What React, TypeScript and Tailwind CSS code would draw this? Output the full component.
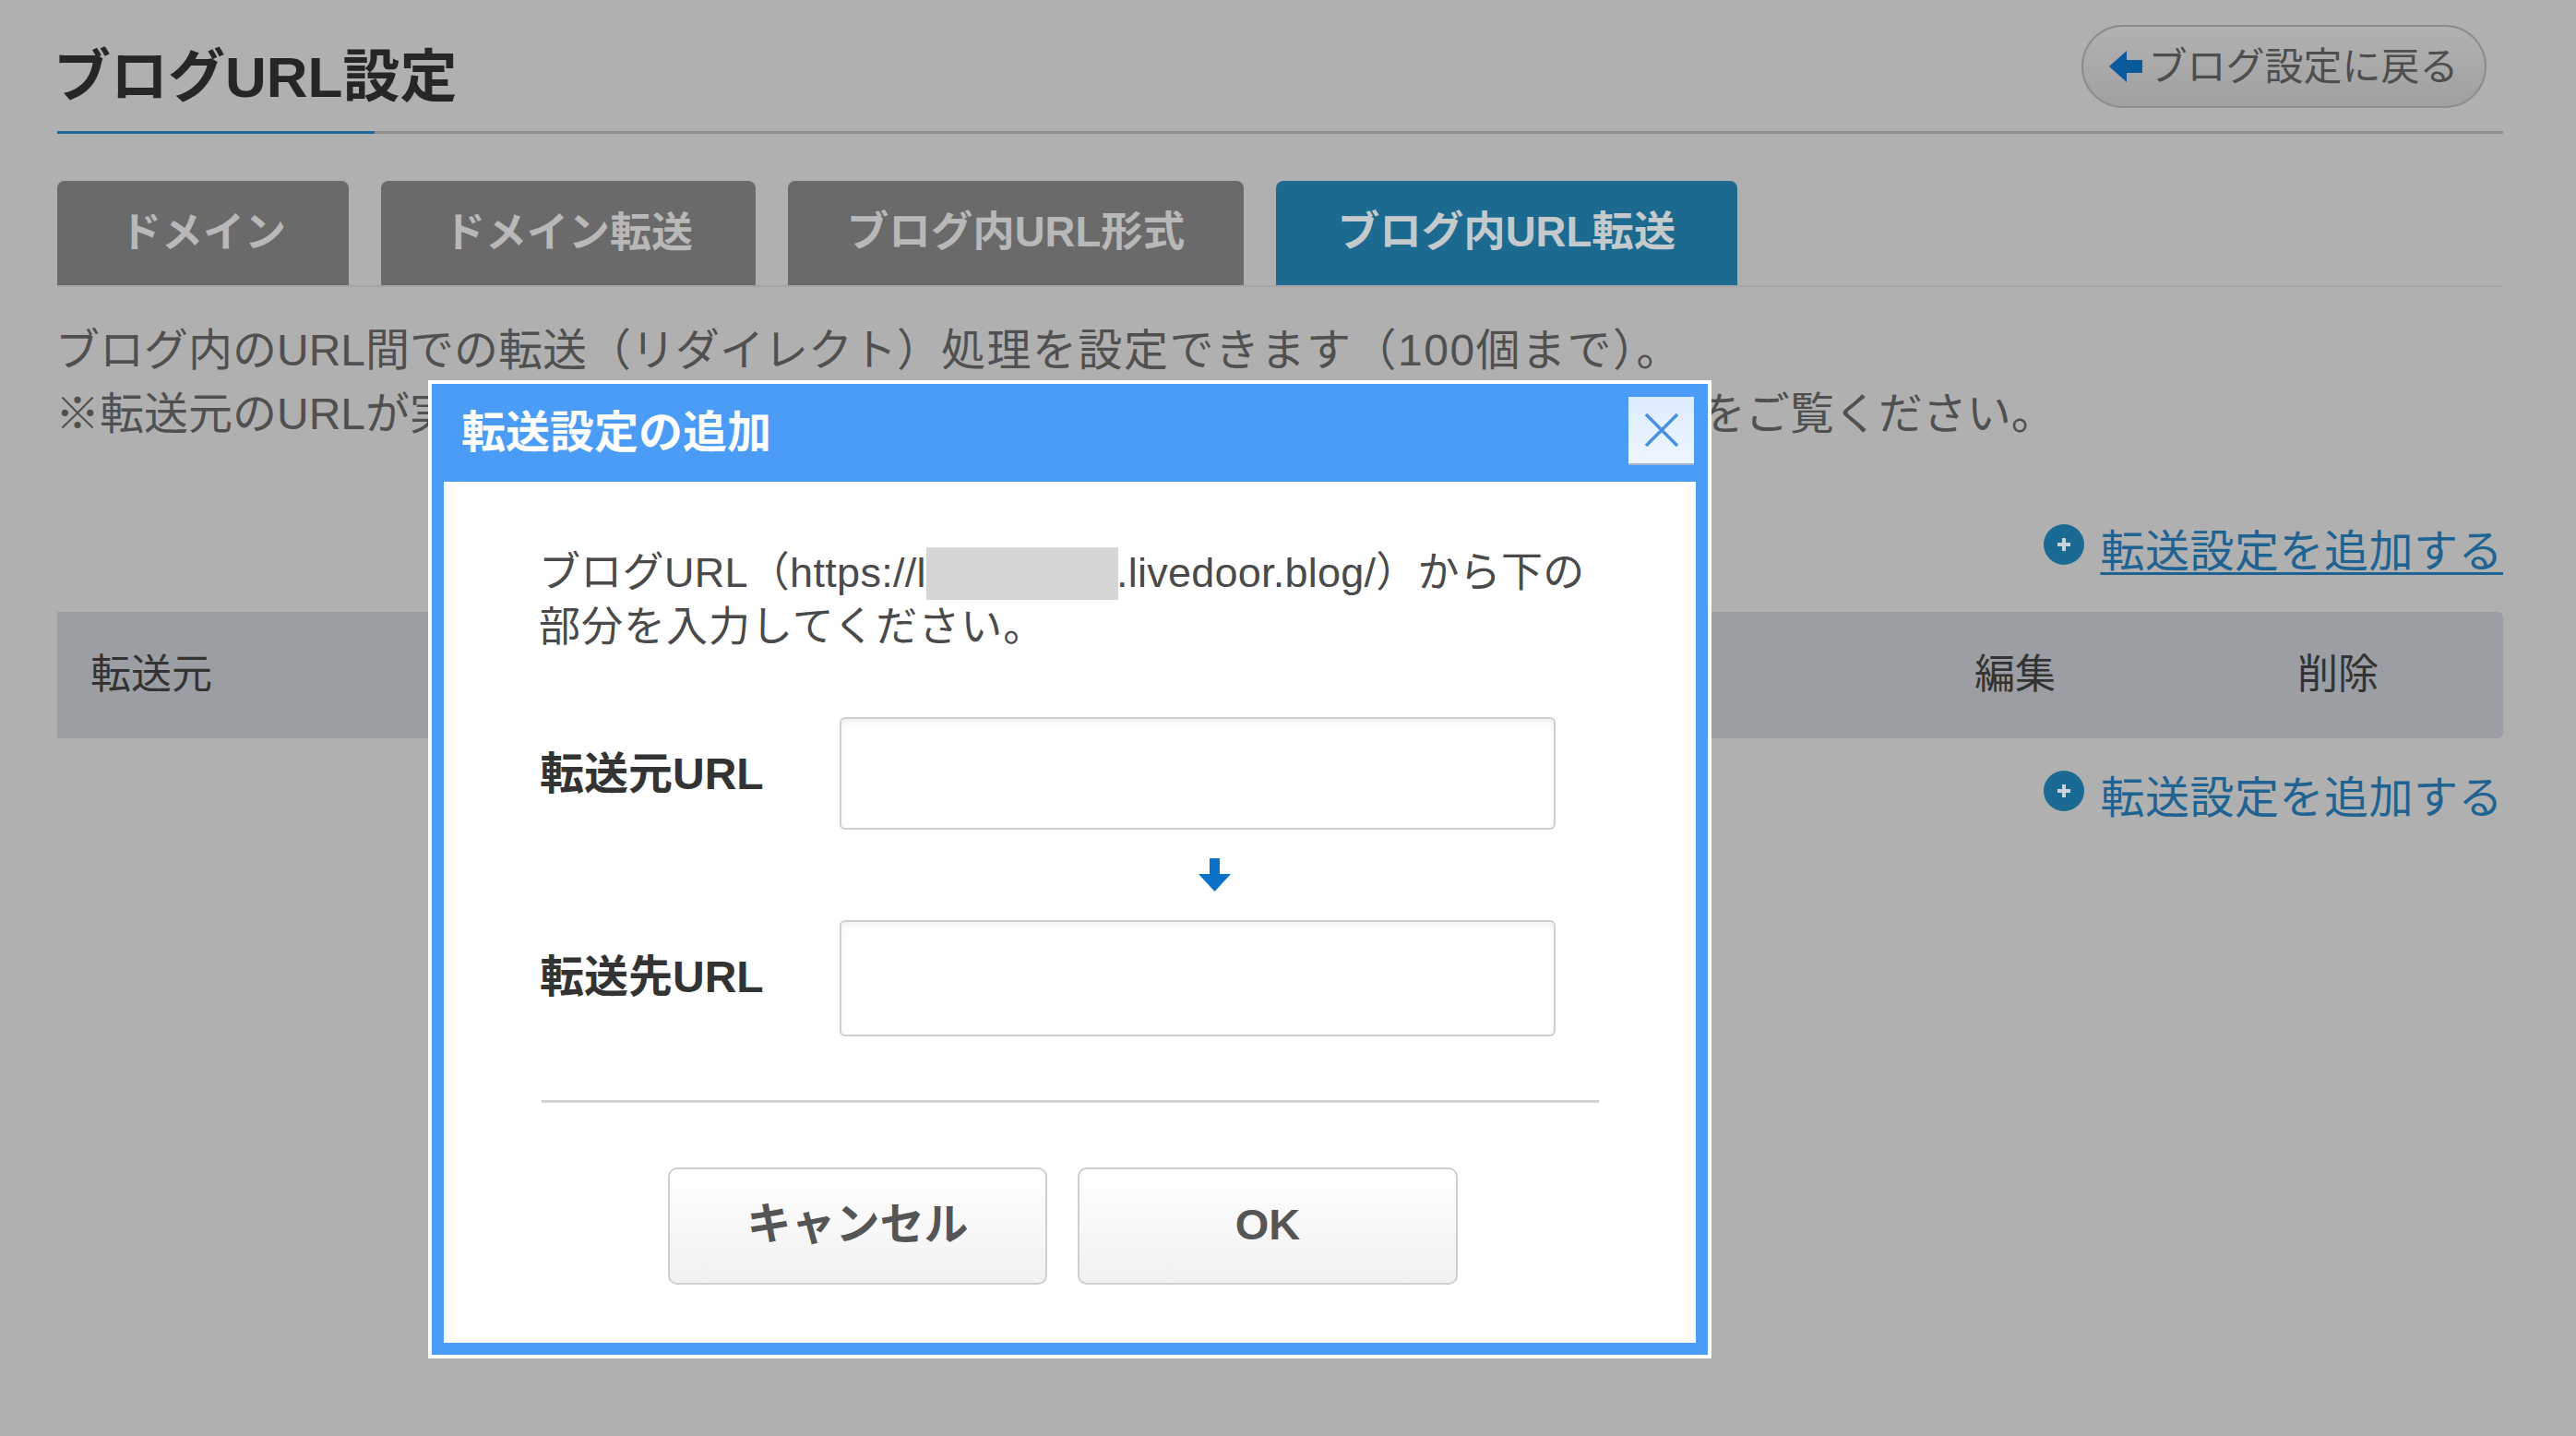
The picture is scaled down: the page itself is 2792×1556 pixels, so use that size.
export default function App() {
  const AddLink = ({ underline }: { underline: boolean }) => (
    <div className="flex h-[60px] items-center justify-end">
      <svg viewBox="0 0 44 46" className="mb-[16px] mr-[17px] h-[46px] w-[44px] shrink-0">
        <circle cx="22" cy="23" r="22" fill="#1a6a94" />
        <path d="M22 16v14M15 23h14" stroke="#c8d4da" strokeWidth="4" fill="none" />
      </svg>
      <a className={"whitespace-nowrap text-[48px] leading-[60px] tracking-[0.5px] text-[#1f6392] " + (underline ? "underline decoration-[3px] underline-offset-[6px]" : "")}>
        転送設定を追加する
      </a>
    </div>
  );

  const tabs = [
    { label: "ドメイン", w: "w-[316px] text-[45px] bg-[#6a6a6a] text-[#b8b8b8]" },
    { label: "ドメイン転送", w: "w-[406px] text-[45px] bg-[#6a6a6a] text-[#b8b8b8]" },
    { label: "ブログ内URL形式", w: "w-[494px] text-[45.5px] bg-[#6a6a6a] text-[#b8b8b8]" },
    { label: "ブログ内URL転送", w: "w-[500px] text-[45.5px] bg-[#1d6a90] text-[#c4c9cc]" },
  ];

  return (
    <div className="relative h-[1556px] w-[2792px] overflow-hidden bg-[#b0b0b0] font-['Liberation_Sans','Noto_Sans_CJK_JP',sans-serif] text-[#505050]">
      <main className="pl-[62px] pr-[79px]">
        <header className="flex h-[142px] items-start justify-between">
          <h1 className="-ml-[4px] mt-[48px] whitespace-nowrap text-[62px] font-bold leading-[72px] text-[#262626]">ブログURL設定</h1>
          <button className="mr-[18px] mt-[27px] flex h-[90px] w-[439px] items-center justify-center rounded-full border-2 border-[#8c8c8c] bg-gradient-to-b from-[#b2b2b2] to-[#a0a0a0] text-[42px] text-[#4e4e4e]">
            <svg viewBox="0 0 36 34" className="mr-[6px] h-[34px] w-[36px] shrink-0">
              <path d="M0 17 19 0v10h17v14H19v10z" fill="#0a5a9c" />
            </svg>
            <span className="whitespace-nowrap">ブログ設定に戻る</span>
          </button>
        </header>
        <div className="h-[3px] bg-[#909090]">
          <div className="h-full w-[344px] bg-[#1a6a94]" />
        </div>

        <nav className="mt-[51px] flex gap-[35px] border-b-2 border-[#a4a4a4]">
          {tabs.map((t) => (
            <div key={t.label} className={"flex h-[113px] items-center justify-center rounded-t-[8px] font-bold whitespace-nowrap " + t.w}>
              {t.label}
            </div>
          ))}
        </nav>

        <div className="-ml-[2px] mt-[34px] text-[48px] leading-[69px] whitespace-nowrap">
          <p>ブログ内のURL間での転送（リダイレクト）<span className="tracking-[1.5px]">処理を設定できます（100個まで）。</span></p>
          <p>※転送元のURLが実在するページの場合は転送が行われません。詳細はFAQ ページをご覧ください。</p>
        </div>

        <div className="mt-[85px]"><AddLink underline /></div>

        <div className="mt-[35px] flex h-[137px] items-center rounded-r-[6px] bg-[#9b9ea2] pb-[2px] pl-[36px] text-[44px] text-[#333333]">
          <span className="flex-1">転送元</span>
          <span className="w-[350px]">編集</span>
          <span className="w-[223px]">削除</span>
        </div>

        <div className="mt-[35px]"><AddLink underline={false} /></div>
      </main>

      <section className="absolute left-[464px] top-[412px] flex h-[1060px] w-[1391px] flex-col border-4 border-white bg-[#4a9cf7]">
        <div className="flex h-[106px] shrink-0 items-start justify-between pl-[32px] pr-[15px] pt-[14px]">
          <h2 className="mt-[6px] text-[48px] font-bold leading-[66px] text-white whitespace-nowrap">転送設定の追加</h2>
          <button className="flex h-[74px] w-[71px] items-center justify-center border-b-2 border-[#9fb4c9] bg-gradient-to-b from-[#dcecff] to-[#eef6ff]">
            <svg viewBox="0 0 38 38" className="h-[38px] w-[38px]">
              <path d="M2 2l34 34M36 2 2 36" stroke="#4a90e2" strokeWidth="3.5" fill="none" />
            </svg>
          </button>
        </div>
        <div className="mx-[13px] mb-[13px] flex-1 bg-white pl-[106px] pr-[105px] pt-[69px]">
          <p className="-ml-[3px] text-[45px] leading-[59px] whitespace-nowrap text-[#4a4a4a]">
            <span className="tracking-[0.3px]">ブログURL（https://l</span><span className="inline-block h-[57px] w-[208px] bg-[#d6d6d6] align-[-14px]" /><span className="-ml-[2px] tracking-[0.25px]">.livedoor.blog/）から下の</span><br /><span className="tracking-[1px]">部分を入力してください。</span>
          </p>
          <div className="mt-[68px] flex items-center">
            <label className="-ml-[2px] w-[325px] pt-[2px] text-[48px] font-bold text-[#333333]">転送元URL</label>
            <div className="h-[122px] w-[776px] rounded-[6px] border-2 border-[#cfcfcf] bg-white shadow-[inset_0_4px_6px_rgba(0,0,0,0.06)]" />
          </div>
          <div className="flex h-[98px] items-center pl-[712px]">
            <svg viewBox="0 0 35 36" className="h-[36px] w-[35px]">
              <path d="M17.5 36 0 17h12V0h11v17h12z" fill="#0a72c9" />
            </svg>
          </div>
          <div className="flex items-center">
            <label className="-ml-[2px] w-[325px] pb-[2px] text-[48px] font-bold text-[#333333]">転送先URL</label>
            <div className="h-[126px] w-[776px] rounded-[6px] border-2 border-[#cfcfcf] bg-white shadow-[inset_0_4px_6px_rgba(0,0,0,0.06)]" />
          </div>
          <div className="mt-[69px] h-[3px] bg-[#d4d4d4]" />
          <div className="mt-[70px] flex gap-[33px] pl-[137px]">
            <button className="h-[127px] w-[411px] rounded-[10px] border-2 border-[#cdd1cd] bg-gradient-to-b from-[#ffffff] to-[#f1f1f1] pb-[3px] text-[48px] font-bold text-[#555555]">キャンセル</button>
            <button className="h-[127px] w-[412px] rounded-[10px] border-2 border-[#cdd1cd] bg-gradient-to-b from-[#ffffff] to-[#f1f1f1] pb-[3px] text-[47px] font-bold text-[#555555]">OK</button>
          </div>
        </div>
      </section>
    </div>
  );
}
